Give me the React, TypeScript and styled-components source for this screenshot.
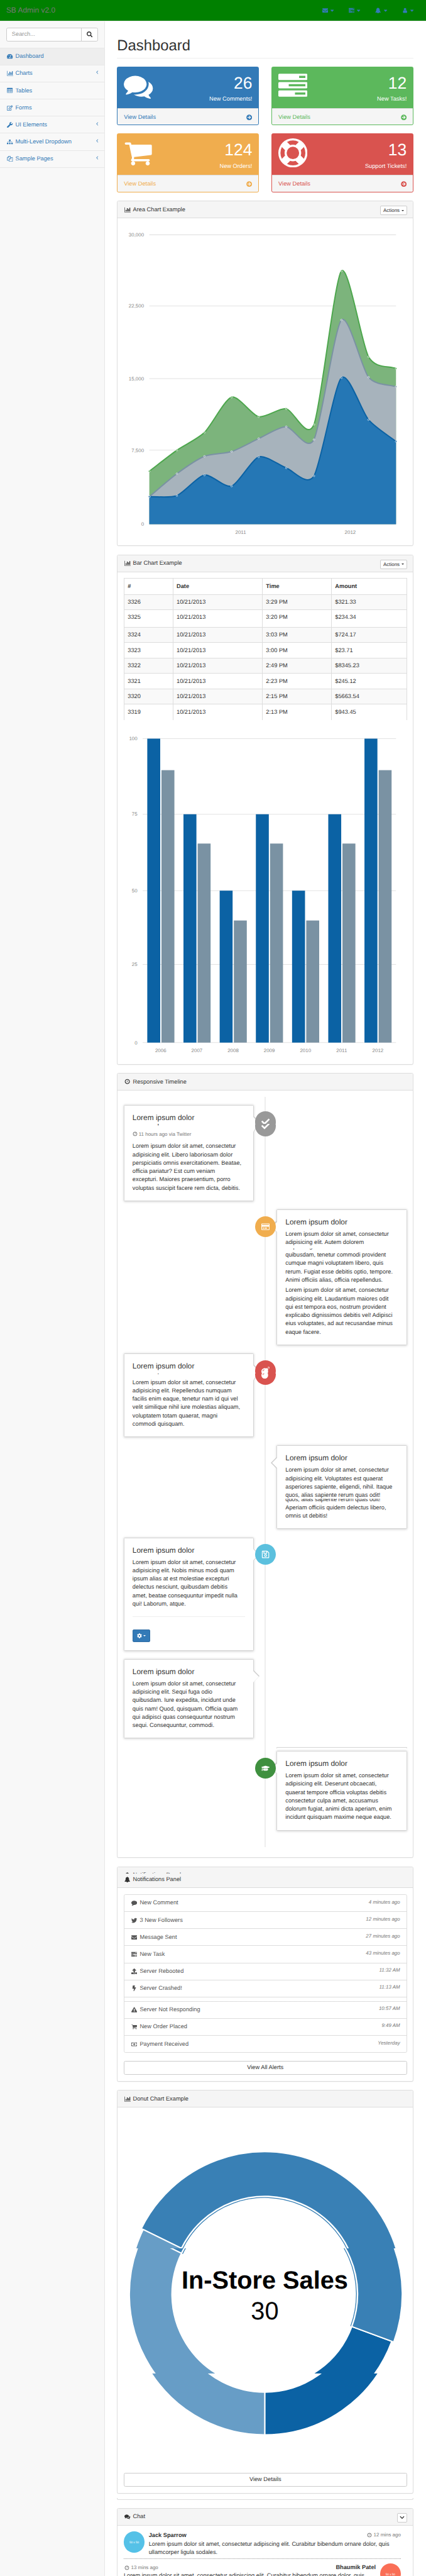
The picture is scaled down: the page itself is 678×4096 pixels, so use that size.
import React from "react";
import styled, { createGlobalStyle, css } from "styled-components";
import {
  FaTachometerAlt, FaRegEdit, FaWrench, FaSitemap, FaSearch, FaEnvelope, FaCaretDown,
  FaArrowCircleRight, FaTwitter, FaUpload, FaBolt, FaExclamationTriangle, FaRegMoneyBillAlt,
  FaCheck, FaRegCreditCard, FaBomb, FaRegSave, FaGraduationCap, FaCog, FaChevronDown,
} from "react-icons/fa";

const Global = createGlobalStyle`
  *, *::before, *::after { box-sizing: border-box; }
  html, body { margin: 0; padding: 0; overflow: hidden; }
  body { background: #f8f8f8; text-rendering: geometricPrecision; }
`;

/* ---------- glyphs ---------- */

const glyphs = {
  tasks: "M1024 1408h640v-128h-640v128zm-384-512h1024v-128h-1024v128zm640-512h384v-128h-384v128zm512 832v256q0 26-19 45t-45 19h-1664q-26 0-45-19t-19-45v-256q0-26 19-45t45-19h1664q26 0 45 19t19 45zm0-512v256q0 26-19 45t-45 19h-1664q-26 0-45-19t-19-45v-256q0-26 19-45t45-19h1664q26 0 45 19t19 45zm0-512v256q0 26-19 45t-45 19h-1664q-26 0-45-19t-19-45v-256q0-26 19-45t45-19h1664q26 0 45 19t19 45z",
  comments: "M1408 768q0 139-94 257t-256.5 186.5-353.5 68.5q-86 0-176-16-124 88-278 128-36 9-86 16h-3q-11 0-20.5-8t-11.5-21q-1-3-1-6.5t.5-6.5 2-6l2.5-5 3.5-5.5 4-5 4.5-5 4-4.5q5-6 23-25t26-29.5 22.5-29 25-38.5 20.5-44q-124-72-195-177t-71-224q0-139 94-257t256.5-186.5 353.5-68.5 353.5 68.5 256.5 186.5 94 257zm384 256q0 120-71 224.5t-195 176.5q10 24 20.5 44t25 38.5 22.5 29 26 29.5 23 25q1 1 4 4.5t4.5 5 4 5 3.5 5.5l2.5 5 2 6 .5 6.5-1 6.5q-3 14-13 22t-22 7q-50-7-86-16-154-40-278-128-90 16-176 16-271 0-472-132 58 4 88 4 161 0 309-45t264-129q125-92 192-212t67-254q0-77-23-152 129 71 204 178t75 230z",
  cart: "M704 1536q0 52-38 90t-90 38-90-38-38-90 38-90 90-38 90 38 38 90zm896 0q0 52-38 90t-90 38-90-38-38-90 38-90 90-38 90 38 38 90zm128-1088v512q0 24-16.5 42.5t-40.5 21.5l-1044 122q13 60 13 70 0 16-24 64h920q26 0 45 19t19 45-19 45-45 19h-1024q-26 0-45-19t-19-45q0-11 8-31.5t16-36 21.5-40 15.5-29.5l-177-823h-204q-26 0-45-19t-19-45 19-45 45-19h256q16 0 28.5 6.5t19.5 15.5 13 24.5 8 26 5.5 29.5 4.5 26h1201q26 0 45 19t19 45z",
  ring: "M896 0q182 0 348 71t286 191 191 286 71 348-71 348-191 286-286 191-348 71-348-71-286-191-191-286-71-348 71-348 191-286 286-191 348-71zm0 128q-190 0-361 90l194 194q82-28 167-28t167 28l194-194q-171-90-361-90zm-678 1129l194-194q-28-82-28-167t28-167l-194-194q-90 171-90 361t90 361zm678 407q190 0 361-90l-194-194q-82 28-167 28t-167-28l-194 194q171 90 361 90zm0-384q159 0 271.5-112.5t112.5-271.5-112.5-271.5-271.5-112.5-271.5 112.5-112.5 271.5 112.5 271.5 271.5 112.5zm484-217l194 194q90-171 90-361t-90-361l-194 194q28 82 28 167t-28 167z",
  chart: "M640 896v512h-256v-512h256zm384-512v1024h-256v-1024h256zm1024 1152v128h-2048v-1536h128v1408h1920zm-640-896v768h-256v-768h256zm384-384v1152h-256v-1152h256z",
  files: "M1696 384q40 0 68 28t28 68v1216q0 40-28 68t-68 28h-960q-40 0-68-28t-28-68v-288h-544q-40 0-68-28t-28-68v-672q0-40 20-88t48-76l408-408q28-28 76-48t88-20h416q40 0 68 28t28 68v328q68-40 128-40h416zm-544 213l-299 299h299v-299zm-640-384l-299 299h299v-299zm196 647l316-316v-416h-384v416q0 40-28 68t-68 28h-416v640h512v-256q0-40 20-88t48-76zm956 804v-1152h-384v416q0 40-28 68t-68 28h-416v640h896z",
  angle: "M1203 544q0 13-10 23l-393 393 393 393q10 10 10 23t-10 23l-50 50q-10 10-23 10t-23-10l-466-466q-10-10-10-23t10-23l466-466q10-10 23-10t23 10l50 50q10 10 10 23z",
  clock: "M1024 544v448q0 14-9 23t-23 9h-320q-14 0-23-9t-9-23v-64q0-14 9-23t23-9h224v-352q0-14 9-23t23-9h64q14 0 23 9t9 23zm416 352q0-148-73-273t-198-198-273-73-273 73-198 198-73 273 73 273 198 198 273 73 273-73 198-198 73-273zm224 0q0 209-103 385.5t-279.5 279.5-385.5 103-385.5-103-279.5-279.5-103-385.5 103-385.5 279.5-279.5 385.5-103 385.5 103 279.5 279.5 103 385.5z",
  comment: "M1792 896q0 174-120 321.5t-326 233-450 85.5q-70 0-145-8-198 175-460 242-49 14-114 22-17 2-30.5-9t-17.5-29v-1q-3-4-.5-12t2-10 4.5-9.5l6-9 7-8.5 8-9q7-8 31-34.5t34.5-38 31-39.5 32.5-51 27-59 26-76q-157-89-247.5-220t-90.5-281q0-130 71-248.5t191-204.5 286-136.5 348-50.5q244 0 450 85.5t326 233 120 321.5z",
  user: "M1536 1399q0 109-62.5 187t-150.5 78h-854q-88 0-150.5-78t-62.5-187q0-85 8.5-160.5t31.5-152 58.5-131 94-89 134.5-34.5q131 128 313 128t313-128q76 0 134.5 34.5t94 89 58.5 131 31.5 152 8.5 160.5zm-256-887q0 159-112.5 271.5t-271.5 112.5-271.5-112.5-112.5-271.5 112.5-271.5 271.5-112.5 271.5 112.5 112.5 271.5z",
  bell: "M912 1696q0-16-16-16-59 0-101.5-42.5t-42.5-101.5q0-16-16-16t-16 16q0 73 51.5 124.5t124.5 51.5q16 0 16-16zm816-288q0 52-38 90t-90 38h-448q0 106-75 181t-181 75-181-75-75-181h-448q-52 0-90-38t-38-90q50-42 91-88t85-119.5 74.5-158.5 50-206 19.5-260q0-152 117-282.5t307-158.5q-8-19-8-39 0-40 28-68t68-28 68 28 28 68q0 20-8 39 190 28 307 158.5t117 282.5q0 139 19.5 260t50 206 74.5 158.5 85 119.5 91 88z",
  table: "M160 128h1472q128 0 128 128v1280q0 128-128 128h-1472q-128 0-128-128v-1280q0-128 128-128zM160 512v256h352v-256zM640 512v256h480v-256zM1248 512v256h384v-256zM160 896v256h352v-256zM640 896v256h480v-256zM1248 896v256h384v-256zM160 1280v256h352v-256zM640 1280v256h480v-256zM1248 1280v256h384v-256z",
};
type GlyphName = keyof typeof glyphs;

const GlyphSvg = styled.svg`
  display: block;
  height: 1em;
  fill: currentColor;
  flex: none;
`;
const Glyph = ({ name }: { name: GlyphName }) => (
  <GlyphSvg viewBox={name === "chart" ? "0 0 2048 1792" : "0 0 1792 1792"}>
    <path d={glyphs[name]} fillRule={name === "table" ? "evenodd" : "nonzero"} />
  </GlyphSvg>
);

const FixedIcon = styled.span`
  display: inline-flex;
  justify-content: center;
  align-items: center;
  width: 18px;
  margin-right: 4px;
  flex: none;
  svg { display: block; }
`;

/* ---------- page frame ---------- */

const Page = styled.div`
  zoom: 0.662;
  width: 1024.2px;
  height: 6187.3px;
  overflow: hidden;
  background: #f8f8f8;
  color: #333;
  font: 14px/20px "Liberation Sans", Arial, sans-serif;
`;
const Navbar = styled.header`
  display: flex;
  justify-content: space-between;
  align-items: center;
  height: 51px;
  padding: 0 11px 0 15px;
  background: #008000;
  border-bottom: 1px solid #e7e7e7;
`;
const Brand = styled.div`
  font-size: 18px;
  color: #777;
`;
const NavLinks = styled.nav`
  display: flex;
  color: #337ab7;
`;
const NavLink = styled.div`
  display: flex;
  align-items: center;
  width: 64px;
  padding-left: 15px;
  > svg { margin-left: -3px; }
`;
const Columns = styled.div`
  display: flex;
  height: 6137px;
`;
const Sidebar = styled.aside`
  width: 250px;
  flex: none;
`;
const SearchRow = styled.div`
  height: 65px;
  padding: 15px;
  border-bottom: 1px solid #e7e7e7;
`;
const SearchGroup = styled.div`
  display: flex;
  height: 34px;
  border: 1px solid #ccc;
  border-radius: 4px;
  background: #fff;
`;
const SearchInput = styled.div`
  flex: 1;
  padding: 5px 12px;
  color: #999;
`;
const SearchButton = styled.div`
  display: flex;
  align-items: center;
  justify-content: center;
  width: 38px;
  border-left: 1px solid #ccc;
`;
const MenuItem = styled.div<{ $active?: boolean }>`
  display: flex;
  align-items: center;
  height: 41px;
  padding: 0 10px 0 15px;
  border-bottom: 1px solid #e7e7e7;
  color: #337ab7;
  background: ${(p) => (p.$active ? "#eee" : "transparent")};
`;
const MenuArrow = styled.span`
  margin: -6px 0 0 auto;
`;
const Main = styled.main`
  flex: 1;
  padding: 40px 30px 0;
  background: #fff;
  border-left: 1px solid #e7e7e7;
`;
const Title = styled.h1`
  height: 49px;
  margin: 0 0 20px;
  border-bottom: 1px solid #eee;
  font-size: 36px;
  line-height: 39px;
  font-weight: 400;
`;

/* ---------- stat cards ---------- */

const StatGrid = styled.div`
  display: grid;
  grid-template-columns: 1fr 1fr;
  gap: 20px 30px;
  margin-bottom: 20px;
`;
const StatCard = styled.section<{ $color: string }>`
  height: 141px;
  border: 1px solid ${(p) => p.$color};
  border-radius: 4px;
  background: ${(p) => p.$color};
  color: ${(p) => p.$color};
  overflow: hidden;
`;
const StatTop = styled.div`
  display: flex;
  justify-content: space-between;
  height: 98px;
  padding: 10px 15px;
  color: #fff;
`;
const StatIcon = styled.div`
  font-size: 70px;
`;
const StatText = styled.div`
  text-align: right;
`;
const StatNumber = styled.div`
  font-size: 40px;
  line-height: 57px;
`;
const StatFooter = styled.div`
  display: flex;
  justify-content: space-between;
  align-items: center;
  height: 42px;
  padding: 0 15px;
  border-top: 1px solid #ddd;
  background: #f5f5f5;
`;

/* ---------- panels ---------- */

const Panel = styled.section<{ $h: number; $gap?: number }>`
  height: ${(p) => p.$h}px;
  margin-bottom: ${(p) => p.$gap ?? 20}px;
  border: 1px solid #ddd;
  border-radius: 4px;
  background: #fff;
  box-shadow: 0 1px 1px rgba(0, 0, 0, 0.05);
`;
const Heading = styled.div<{ $h?: number }>`
  display: flex;
  align-items: flex-end;
  height: ${(p) => p.$h ?? 41}px;
  padding: 0 14.5px 9.5px;
  border-bottom: 1px solid #ddd;
  border-radius: 3px 3px 0 0;
  background: #f5f5f5;
`;
const HeadingText = styled.div`
  display: flex;
  align-items: center;
  height: 20px;
`;
const Body = styled.div`
  padding: 14.5px;
`;
const SmallButton = styled.div<{ $w: number }>`
  display: flex;
  align-items: center;
  justify-content: center;
  gap: 4px;
  width: ${(p) => p.$w}px;
  height: 22px;
  margin: 0 0 -3px auto;
  border: 1px solid #ccc;
  border-radius: 3px;
  background: #fff;
  font-size: 12px;
`;
const Caret = styled.span`
  border-top: 4px solid currentColor;
  border-left: 4px solid transparent;
  border-right: 4px solid transparent;
`;
const WideButton = styled.div`
  display: flex;
  align-items: center;
  justify-content: center;
  height: 34px;
  border: 1px solid #ccc;
  border-radius: 4px;
`;
const Chart = styled.svg`
  display: block;
  width: 681px;
  margin: 0 -1px;
  overflow: visible;
`;
const AxisLabel = styled.text`
  font: 12px "Liberation Sans", Arial, sans-serif;
  fill: #888;
`;

const PanelTitle = ({ icon, children }: { icon: React.ReactNode; children: React.ReactNode }) => (
  <HeadingText><FixedIcon>{icon}</FixedIcon>{children}</HeadingText>
);
const Actions = () => <SmallButton $w={64}>Actions<Caret /></SmallButton>;

/* ---------- area chart ---------- */

const areaX = [62.9, 129.2, 195.5, 260.8, 325.8, 392.1, 458.7, 524.7, 590, 656];
const areaSeries = [
  { fill: "#7cb47c", line: "#4da74d", y: [592.5, 542.1, 499.3, 414.7, 461.6, 442.4, 480.3, 111.7, 317.7, 345.9] },
  { fill: "#a7b3bc", line: "#7a92a3", y: [653.7, 598.5, 556.7, 545.3, 514.2, 485.7, 516.6, 229.3, 366.7, 389.5] },
  { fill: "#2577b5", line: "#0b62a4", y: [653.7, 651, 601.7, 628.3, 558.1, 584.6, 603.9, 368.1, 468.9, 521] },
];
const areaBottom = 719.9;
const areaGrid: [number, string][] = [[24.7, "30,000"], [195.7, "22,500"], [370, "15,000"], [542, "7,500"], [719.9, "0"]];

function smoothPath(xs: number[], ys: number[]) {
  const n = xs.length;
  const grad = xs.map((_, i) => {
    const a = Math.max(0, i - 1);
    const b = Math.min(n - 1, i + 1);
    return (ys[b] - ys[a]) / (xs[b] - xs[a]);
  });
  let d = `M${xs[0]},${ys[0]}`;
  for (let i = 1; i < n; i++) {
    const q = (xs[i] - xs[i - 1]) / 4;
    d += `C${xs[i - 1] + q},${ys[i - 1] + q * grad[i - 1]},${xs[i] - q},${ys[i] - q * grad[i]},${xs[i]},${ys[i]}`;
  }
  return d;
}

const AreaChart = () => (
  <Chart viewBox="0 0 681 757" height="757">
    {areaGrid.map(([y, label]) => (
      <g key={label}>
        <path d={`M62.9,${y}H656`} stroke="#e2e2e2" strokeWidth="1.6" />
        <AxisLabel x="50" y={y + 4.2} textAnchor="end">{label}</AxisLabel>
      </g>
    ))}
    <AxisLabel x="282.5" y="743" textAnchor="middle">2011</AxisLabel>
    <AxisLabel x="546" y="743" textAnchor="middle">2012</AxisLabel>
    {areaSeries.map((s) => {
      const d = smoothPath(areaX, s.y);
      return (
        <g key={s.line}>
          <path d={`${d}V${areaBottom}H62.9Z`} fill={s.fill} />
          <path d={d} fill="none" stroke={s.line} strokeWidth="3" />
        </g>
      );
    })}
    {areaSeries.map((s) => s.y.map((y, i) => (
      <circle key={s.line + i} cx={areaX[i]} cy={y} r="2" fill={s.line} stroke="#fff" strokeWidth="1" />
    )))}
  </Chart>
);

/* ---------- bar chart ---------- */

const barLevels: Record<number, number> = { 100: 24.9, 90: 100.6, 75: 206.5, 65: 276.9, 50: 390, 40: 461.7, 25: 567.3, 0: 755 };
const barData: [string, number, number][] = [
  ["2006", 100, 90], ["2007", 75, 65], ["2008", 50, 40], ["2009", 75, 65], ["2010", 50, 40], ["2011", 75, 65], ["2012", 100, 90],
];
const BarChart = () => (
  <Chart viewBox="0 0 681 792" height="792">
    {[100, 75, 50, 25, 0].map((v) => (
      <g key={v}>
        <path d={`M46.8,${barLevels[v]}H656`} stroke="#e2e2e2" strokeWidth="1.6" />
        <AxisLabel x="34.3" y={barLevels[v] + 4.2} textAnchor="end">{v}</AxisLabel>
      </g>
    ))}
    {barData.map(([year, a, b], i) => {
      const x = 46.8 + i * 87.03;
      return (
        <g key={year}>
          <rect x={x + 11.2} y={barLevels[a]} width="31.1" height={755 - barLevels[a]} fill="#0b62a4" />
          <rect x={x + 45.3} y={barLevels[b]} width="31.1" height={755 - barLevels[b]} fill="#7a92a3" />
          <AxisLabel x={x + 43.5} y="778.2" textAnchor="middle">{year}</AxisLabel>
        </g>
      );
    })}
  </Chart>
);

/* ---------- orders table ---------- */

const Table = styled.div`
  height: 340px;
  margin-bottom: 20px;
  border: 1px solid #ddd;
`;
const TableRow = styled.div<{ $kind: "head" | "odd" | "even" | "last"; $h: number }>`
  display: grid;
  grid-template-columns: 116px 215px 166px 1fr;
  height: ${(p) => p.$h}px;
  border-bottom: ${(p) => (p.$kind === "head" ? "2px" : p.$kind === "last" ? "0" : "1px")} solid #ddd;
  background: ${(p) => (p.$kind === "odd" ? "#f9f9f9" : "#fff")};
  font-weight: ${(p) => (p.$kind === "head" ? 700 : 400)};
`;
const Cell = styled.div`
  padding: 8px;
  & + & { border-left: 1px solid #ddd; }
`;
const orders = [
  ["3326", "10/21/2013", "3:29 PM", "$321.33"],
  ["3325", "10/21/2013", "3:20 PM", "$234.34"],
  ["3324", "10/21/2013", "3:03 PM", "$724.17"],
  ["3323", "10/21/2013", "3:00 PM", "$23.71"],
  ["3322", "10/21/2013", "2:49 PM", "$8345.23"],
  ["3321", "10/21/2013", "2:23 PM", "$245.12"],
  ["3320", "10/21/2013", "2:15 PM", "$5663.54"],
  ["3319", "10/21/2013", "2:13 PM", "$943.45"],
];

/* ---------- timeline ---------- */

const TimelineList = styled.div`
  position: relative;
  height: 1803px;
  padding: 20px 0;
  &::before {
    content: "";
    position: absolute;
    top: 0;
    bottom: 0;
    left: 50%;
    width: 3px;
    margin-left: -1.5px;
    background: #eee;
  }
`;
const Entry = styled.div<{ $side: "left" | "right" }>`
  position: relative;
  display: flex;
  justify-content: ${(p) => (p.$side === "left" ? "flex-start" : "flex-end")};
  margin-bottom: 20px;
`;
const arrowLeft = css`
  &::before { left: -15px; border-right: 15px solid #ccc; }
  &::after { left: -13.4px; border-right: 14px solid #fff; }
`;
const arrowRight = css`
  &::before { right: -15px; border-left: 15px solid #ccc; }
  &::after { right: -13.4px; border-left: 14px solid #fff; }
`;
const EntryCard = styled.article<{ $side: "left" | "right"; $h: number; $tall?: boolean }>`
  position: relative;
  width: 313px;
  height: ${(p) => p.$h}px;
  padding: 19.5px 0 0 19.5px;
  border: 1px solid #d4d4d4;
  border-radius: 2px;
  background: #fff;
  box-shadow: 0 1px 6px rgba(0, 0, 0, 0.175);
  &::before, &::after { content: ""; position: absolute; }
  &::before {
    top: 26px;
    border-top: 15px solid transparent;
    border-bottom: ${(p) => (p.$tall ? 25 : 15)}px solid transparent;
  }
  &::after {
    top: 27px;
    border-top: 14px solid transparent;
    border-bottom: ${(p) => (p.$tall ? 24 : 14)}px solid transparent;
  }
  ${(p) => (p.$side === "left" ? arrowRight : arrowLeft)}
`;
const EntryTitle = styled.h4`
  height: 19px;
  margin: 0;
  font-size: 18px;
  line-height: 20px;
  font-weight: 400;
  white-space: nowrap;
`;
const EntryBody = styled.div`
  margin-top: 10px;
`;
const EntryMeta = styled.div`
  display: flex;
  align-items: center;
  gap: 3px;
  height: 20px;
  margin-top: 10px;
  font-size: 12px;
  color: #777;
`;
const Line = styled.div`
  height: 20px;
  white-space: nowrap;
`;
/* a 10px band that shows the tail of the line above it once more */
const EchoBand = styled.div`
  position: relative;
  height: 10px;
`;
const EchoClip = styled.div<{ $skip: number }>`
  position: absolute;
  inset: ${(p) => p.$skip}px 0 0 0;
  overflow: hidden;
  background: #fff;
`;
const EchoShift = styled.div<{ $up: number }>`
  margin-top: -${(p) => p.$up}px;
`;
const Echo = ({ skip, box, children }: { skip: number; box: number; children: React.ReactNode }) => (
  <EchoBand aria-hidden>
    <EchoClip $skip={skip}><EchoShift $up={box - 10 + skip}>{children}</EchoShift></EchoClip>
  </EchoBand>
);
const BadgeWrap = styled.div`
  position: absolute;
  top: 16px;
  left: calc(50% - 25px);
  width: 50px;
`;
const BadgeSlice = styled.div<{ $h: number; $end?: boolean }>`
  display: flex;
  align-items: ${(p) => (p.$end ? "flex-end" : "flex-start")};
  height: ${(p) => p.$h}px;
  overflow: hidden;
`;
const BadgeDisc = styled.div<{ $color: string }>`
  display: flex;
  align-items: center;
  justify-content: center;
  flex: none;
  width: 50px;
  height: 50px;
  border-radius: 50%;
  background: ${(p) => p.$color};
  color: #fff;
  font-size: 20px;
`;
const Badge = ({ color, cut, children }: { color: string; cut?: number; children: React.ReactNode }) => (
  <BadgeWrap>
    <BadgeSlice $h={cut ?? 50}><BadgeDisc $color={color}>{children}</BadgeDisc></BadgeSlice>
    {cut && <BadgeSlice $h={60 - cut} $end><BadgeDisc $color={color}>{children}</BadgeDisc></BadgeSlice>}
  </BadgeWrap>
);
const Lines = ({ text }: { text: string[] }) => <>{text.map((t) => <Line key={t}>{t}</Line>)}</>;
const Rule = styled.hr`
  height: 1px;
  width: 271px;
  margin: 20px 0 29.5px;
  border: 0;
  border-top: 1px solid #eee;
`;
const GearButton = styled.div`
  display: flex;
  align-items: center;
  justify-content: center;
  gap: 3px;
  width: 43px;
  height: 30px;
  border: 1px solid #2e6da4;
  border-radius: 3px;
  background: #337ab7;
  color: #fff;
  font-size: 12px;
`;
const Paragraph = styled.div`
  & + & { margin-top: 5px; }
`;
const TopEdge = styled.div`
  width: 313px;
  height: 3.5px;
  margin: 0 0 6.5px auto;
  border: 1px solid #d4d4d4;
  border-bottom: 0;
  border-radius: 2px 2px 0 0;
`;
const heading = "Lorem ipsum dolor";
const opener = "Lorem ipsum dolor sit amet, consectetur";

const Timeline = () => (
  <TimelineList>
    <Entry $side="left">
      <EntryCard $side="left" $h={231} $tall>
        <EntryTitle>{heading}</EntryTitle>
        <Echo skip={5} box={19}><EntryTitle as="div">{heading}</EntryTitle></Echo>
        <EntryMeta><Glyph name="clock" />11 hours ago via Twitter</EntryMeta>
        <EntryBody>
          <Lines text={[opener, "adipisicing elit. Libero laboriosam dolor", "perspiciatis omnis exercitationem. Beatae,", "officia pariatur? Est cum veniam", "excepturi. Maiores praesentium, porro", "voluptas suscipit facere rem dicta, debitis."]} />
        </EntryBody>
      </EntryCard>
      <Badge color="#999" cut={30}><FaCheck /></Badge>
    </Entry>
    <Entry $side="right">
      <EntryCard $side="right" $h={326}>
        <EntryTitle>{heading}</EntryTitle>
        <EntryBody>
          <Paragraph>
            <Lines text={[opener, "adipisicing elit. Autem dolorem"]} />
            <Echo skip={4} box={20}><Line>adipisicing elit. Autem dolorem</Line></Echo>
            <Lines text={["quibusdam, tenetur commodi provident", "cumque magni voluptatem libero, quis", "rerum. Fugiat esse debitis optio, tempore.", "Animi officiis alias, officia repellendus."]} />
          </Paragraph>
          <Paragraph>
            <Lines text={[opener, "adipisicing elit. Laudantium maiores odit", "qui est tempora eos, nostrum provident", "explicabo dignissimos debitis vel! Adipisci", "eius voluptates, ad aut recusandae minus", "eaque facere."]} />
          </Paragraph>
        </EntryBody>
      </EntryCard>
      <Badge color="#f0ad4e"><FaRegCreditCard /></Badge>
    </Entry>
    <Entry $side="left">
      <EntryCard $side="left" $h={201} $tall>
        <EntryTitle>{heading}</EntryTitle>
        <Echo skip={8.6} box={19}><EntryTitle as="div">{heading}</EntryTitle></Echo>
        <EntryBody>
          <Lines text={[opener, "adipisicing elit. Repellendus numquam", "facilis enim eaque, tenetur nam id qui vel", "velit similique nihil iure molestias aliquam,", "voluptatem totam quaerat, magni", "commodi quisquam."]} />
        </EntryBody>
      </EntryCard>
      <Badge color="#d9534f" cut={33}><FaBomb /></Badge>
    </Entry>
    <Entry $side="right">
      <EntryCard $side="right" $h={201}>
        <EntryTitle>{heading}</EntryTitle>
        <EntryBody>
          <Lines text={[opener, "adipisicing elit. Voluptates est quaerat", "asperiores sapiente, eligendi, nihil. Itaque", "quos, alias sapiente rerum quas odit!"]} />
          <Echo skip={-2.6} box={20}><Line>quos, alias sapiente rerum quas odit!</Line></Echo>
          <Lines text={["Aperiam officiis quidem delectus libero,", "omnis ut debitis!"]} />
        </EntryBody>
      </EntryCard>
    </Entry>
    <Entry $side="left">
      <EntryCard $side="left" $h={272}>
        <EntryTitle>{heading}</EntryTitle>
        <EntryBody>
          <Lines text={[opener, "adipisicing elit. Nobis minus modi quam", "ipsum alias at est molestiae excepturi", "delectus nesciunt, quibusdam debitis", "amet, beatae consequuntur impedit nulla", "qui! Laborum, atque."]} />
          <Rule />
          <GearButton><FaCog /><Caret /></GearButton>
        </EntryBody>
      </EntryCard>
      <Badge color="#5bc0de"><FaRegSave /></Badge>
    </Entry>
    <Entry $side="left">
      <EntryCard $side="left" $h={191}>
        <EntryTitle>{heading}</EntryTitle>
        <EntryBody>
          <Lines text={[opener, "adipisicing elit. Sequi fuga odio", "quibusdam. Iure expedita, incidunt unde", "quis nam! Quod, quisquam. Officia quam", "qui adipisci quas consequuntur nostrum", "sequi. Consequuntur, commodi."]} />
        </EntryBody>
      </EntryCard>
    </Entry>
    <TopEdge />
    <Entry $side="right">
      <EntryCard $side="right" $h={191}>
        <EntryTitle>{heading}</EntryTitle>
        <EntryBody>
          <Lines text={[opener, "adipisicing elit. Deserunt obcaecati,", "quaerat tempore officia voluptas debitis", "consectetur culpa amet, accusamus", "dolorum fugiat, animi dicta aperiam, enim", "incidunt quisquam maxime neque eaque."]} />
        </EntryBody>
      </EntryCard>
      <Badge color="#3f903f"><FaGraduationCap /></Badge>
    </Entry>
  </TimelineList>
);

/* ---------- notifications ---------- */

const TitleStack = styled.div``;
const TitleTop = styled.div`
  height: 6px;
  margin-bottom: 4px;
  overflow: hidden;
`;
const NoticeList = styled.div`
  height: 380px;
  margin-bottom: 20px;
  border: 1px solid #ddd;
  border-radius: 4px;
`;
const Notice = styled.div<{ $spaced?: boolean; $last?: boolean }>`
  display: flex;
  align-items: center;
  height: 41px;
  padding: 0 15px;
  border-bottom: ${(p) => (p.$last ? 0 : 1)}px solid #ddd;
  color: #555;
  ${(p) => p.$spaced && css`
    height: 51px;
    padding-top: 10px;
    background: linear-gradient(#ddd, #ddd) 0 8.8px / 100% 1.51px no-repeat;
  `}
`;
const NoticeTime = styled.em`
  margin: -5px 0 0 auto;
  font-size: 12px;
  color: #777;
`;
const notices: [React.ReactNode, string, string][] = [
  [<Glyph name="comment" />, "New Comment", "4 minutes ago"],
  [<FaTwitter />, "3 New Followers", "12 minutes ago"],
  [<FaEnvelope />, "Message Sent", "27 minutes ago"],
  [<Glyph name="tasks" />, "New Task", "43 minutes ago"],
  [<FaUpload />, "Server Rebooted", "11:32 AM"],
  [<FaBolt />, "Server Crashed!", "11:13 AM"],
  [<FaExclamationTriangle />, "Server Not Responding", "10:57 AM"],
  [<Glyph name="cart" />, "New Order Placed", "9:49 AM"],
  [<FaRegMoneyBillAlt />, "Payment Received", "Yesterday"],
];

/* ---------- donut chart ---------- */

const donutInner = 220.3;
const donutOuter = 330.5;
const donutSlices = [
  { value: 12, color: "#0b62a4", selected: false },
  { value: 30, color: "#3980b5", selected: true },
  { value: 20, color: "#679dc6", selected: false },
];
const DonutRing = ({ cy }: { cy: number }) => {
  const at = (r: number, a: number) => `${340.5 + r * Math.sin(a)},${cy + r * Math.cos(a)}`;
  let start = 0;
  return (
    <>
      {donutSlices.map((s) => {
        const a = start;
        const b = start + (1.9999 * Math.PI * s.value) / 62;
        start = b;
        const big = b - a > Math.PI ? 1 : 0;
        const inner = donutInner + 3;
        const outer = s.selected ? donutOuter : donutOuter - 5;
        return (
          <g key={s.color}>
            {s.selected && (
              <path d={`M${at(donutInner, a)}A${donutInner},${donutInner},0,${big},0,${at(donutInner, b)}`} fill="none" stroke={s.color} strokeWidth="2" />
            )}
            <path
              d={`M${at(inner, a)}A${inner},${inner},0,${big},0,${at(inner, b)}L${at(outer, b)}A${outer},${outer},0,${big},1,${at(outer, a)}Z`}
              fill={s.color}
              stroke="#fff"
              strokeWidth="3"
            />
          </g>
        );
      })}
    </>
  );
};
const DonutText = styled.text<{ $bold?: boolean }>`
  font: ${(p) => (p.$bold ? 700 : 400)} 60px "Liberation Sans", Arial, sans-serif;
  fill: #000;
`;
/* each band runs a little under the next one, which covers the overlap */
const donutBands = [
  { top: 0, bottom: 324.5, cy: 421.5 },
  { top: 323.27, bottom: 624.5, cy: 433.5 },
  { top: 623.87, bottom: 862, cy: 445.5 },
];
const DonutChart = () => (
  <Chart viewBox="0 0 681 862" height="862">
    {donutBands.map((b, i) => (
      <g key={i}>
        <clipPath id={`band${i}`}><rect x="0" y={b.top} width="681" height={b.bottom - b.top} /></clipPath>
        <g clipPath={`url(#band${i})`}>
          <rect x="0" y={b.top} width="681" height={b.bottom - b.top} fill="#fff" shapeRendering="crispEdges" />
          <DonutRing cy={b.cy} />
        </g>
      </g>
    ))}
    <DonutText $bold x="340.5" y="419.8" textAnchor="middle">In-Store Sales</DonutText>
    <DonutText x="340.5" y="493.3" textAnchor="middle">30</DonutText>
  </Chart>
);
const BottomEdge = styled.div`
  height: 4px;
  margin: 0 0 20px;
  border: 1px solid #ddd;
  border-top: 0;
  border-radius: 0 0 4px 4px;
`;

/* ---------- chat ---------- */

const ChatItem = styled.div<{ $reverse?: boolean }>`
  display: flex;
  flex-direction: ${(p) => (p.$reverse ? "row-reverse" : "row")};
  gap: 10px;
  width: 666px;
  height: 66px;
  margin-bottom: 10px;
  border-bottom: 1px dotted #999;
`;
const Avatar = styled.div<{ $color: string }>`
  display: flex;
  align-items: center;
  justify-content: center;
  flex: none;
  width: 50px;
  height: 50px;
  border-radius: 50%;
  background: ${(p) => p.$color};
  color: #fff;
  font-size: 7px;
  padding-top: 3px;
`;
const ChatContent = styled.div`
  flex: 1;
  white-space: nowrap;
`;
const ChatHead = styled.div`
  display: flex;
  justify-content: space-between;
  height: 20px;
`;
const ChatTime = styled.span`
  display: flex;
  align-items: center;
  gap: 4.5px;
  height: 16px;
  font-size: 12px;
  color: #777;
`;
const LaterTime = styled(ChatTime)`
  height: 22px;
  padding-left: 1px;
`;

/* ---------- page ---------- */

const menu: [React.ReactNode, string, boolean][] = [
  [<FaTachometerAlt />, "Dashboard", false],
  [<Glyph name="chart" />, "Charts", true],
  [<Glyph name="table" />, "Tables", false],
  [<FaRegEdit />, "Forms", false],
  [<FaWrench />, "UI Elements", true],
  [<FaSitemap />, "Multi-Level Dropdown", true],
  [<Glyph name="files" />, "Sample Pages", true],
];
const stats: [GlyphName, string, string, string][] = [
  ["comments", "26", "New Comments!", "#337ab7"],
  ["tasks", "12", "New Tasks!", "#5cb85c"],
  ["cart", "124", "New Orders!", "#f0ad4e"],
  ["ring", "13", "Support Tickets!", "#d9534f"],
];
const navIcons = [<FaEnvelope />, <Glyph name="tasks" />, <Glyph name="bell" />, <Glyph name="user" />];

export default function App() {
  return (
    <Page>
      <Global />
      <Navbar>
        <Brand>SB Admin v2.0</Brand>
        <NavLinks>
          {navIcons.map((icon, i) => (
            <NavLink key={i}><FixedIcon>{icon}</FixedIcon><FaCaretDown /></NavLink>
          ))}
        </NavLinks>
      </Navbar>
      <Columns>
        <Sidebar>
          <SearchRow>
            <SearchGroup>
              <SearchInput>Search...</SearchInput>
              <SearchButton><FaSearch /></SearchButton>
            </SearchGroup>
          </SearchRow>
          {menu.map(([icon, label, more]) => (
            <MenuItem key={label} $active={label === "Dashboard"}>
              <FixedIcon>{icon}</FixedIcon>{label}
              {more && <MenuArrow><Glyph name="angle" /></MenuArrow>}
            </MenuItem>
          ))}
        </Sidebar>
        <Main>
          <Title>Dashboard</Title>
          <StatGrid>
            {stats.map(([icon, count, label, color]) => (
              <StatCard key={label} $color={color}>
                <StatTop>
                  <StatIcon><Glyph name={icon} /></StatIcon>
                  <StatText><StatNumber>{count}</StatNumber>{label}</StatText>
                </StatTop>
                <StatFooter>View Details<FaArrowCircleRight /></StatFooter>
              </StatCard>
            ))}
          </StatGrid>

          <Panel $h={830}>
            <Heading><PanelTitle icon={<Glyph name="chart" />}>Area Chart Example</PanelTitle><Actions /></Heading>
            <Body><AreaChart /></Body>
          </Panel>

          <Panel $h={1225}>
            <Heading><PanelTitle icon={<Glyph name="chart" />}>Bar Chart Example</PanelTitle><Actions /></Heading>
            <Body>
              <Table>
                <TableRow $kind="head" $h={38}>
                  <Cell>#</Cell><Cell>Date</Cell><Cell>Time</Cell><Cell>Amount</Cell>
                </TableRow>
                {orders.map((o, i) => (
                  <TableRow key={o[0]} $h={i === 1 ? 42 : 37} $kind={i === 7 ? "last" : i % 2 ? "even" : "odd"}>
                    {o.map((c) => <Cell key={c}>{c}</Cell>)}
                  </TableRow>
                ))}
              </Table>
              <BarChart />
            </Body>
          </Panel>

          <Panel $h={1886}>
            <Heading><PanelTitle icon={<Glyph name="clock" />}>Responsive Timeline</PanelTitle></Heading>
            <Body><Timeline /></Body>
          </Panel>

          <Panel $h={517}>
            <Heading $h={51}>
              <TitleStack>
                <TitleTop aria-hidden><PanelTitle icon={<Glyph name="bell" />}>Notifications Panel</PanelTitle></TitleTop>
                <PanelTitle icon={<Glyph name="bell" />}>Notifications Panel</PanelTitle>
              </TitleStack>
            </Heading>
            <Body>
              <NoticeList>
                {notices.map(([icon, label, time], i) => (
                  <Notice key={label} $spaced={i === 6} $last={i === 8}>
                    <FixedIcon>{icon}</FixedIcon>{label}<NoticeTime>{time}</NoticeTime>
                  </Notice>
                ))}
              </NoticeList>
              <WideButton>View All Alerts</WideButton>
            </Body>
          </Panel>

          <Panel $h={969} $gap={11}>
            <Heading><PanelTitle icon={<Glyph name="chart" />}>Donut Chart Example</PanelTitle></Heading>
            <Body>
              <DonutChart />
              <WideButton>View Details</WideButton>
            </Body>
          </Panel>
          <BottomEdge />

          <Panel $h={400}>
            <Heading>
              <PanelTitle icon={<Glyph name="comments" />}>Chat</PanelTitle>
              <SmallButton $w={24}><FaChevronDown /></SmallButton>
            </Heading>
            <Body>
              <ChatItem>
                <Avatar $color="#55c1e7">50 x 50</Avatar>
                <ChatContent>
                  <ChatHead><b>Jack Sparrow</b><ChatTime><Glyph name="clock" />12 mins ago</ChatTime></ChatHead>
                  <Line>Lorem ipsum dolor sit amet, consectetur adipiscing elit. Curabitur bibendum ornare dolor, quis</Line>
                  <Line>ullamcorper ligula sodales.</Line>
                </ChatContent>
              </ChatItem>
              <ChatItem $reverse>
                <Avatar $color="#fa6f57">50 x 50</Avatar>
                <ChatContent>
                  <ChatHead><LaterTime><Glyph name="clock" />13 mins ago</LaterTime><b>Bhaumik Patel</b></ChatHead>
                  <Line>Lorem ipsum dolor sit amet, consectetur adipiscing elit. Curabitur bibendum ornare dolor, quis</Line>
                </ChatContent>
              </ChatItem>
            </Body>
          </Panel>
        </Main>
      </Columns>
    </Page>
  );
}
